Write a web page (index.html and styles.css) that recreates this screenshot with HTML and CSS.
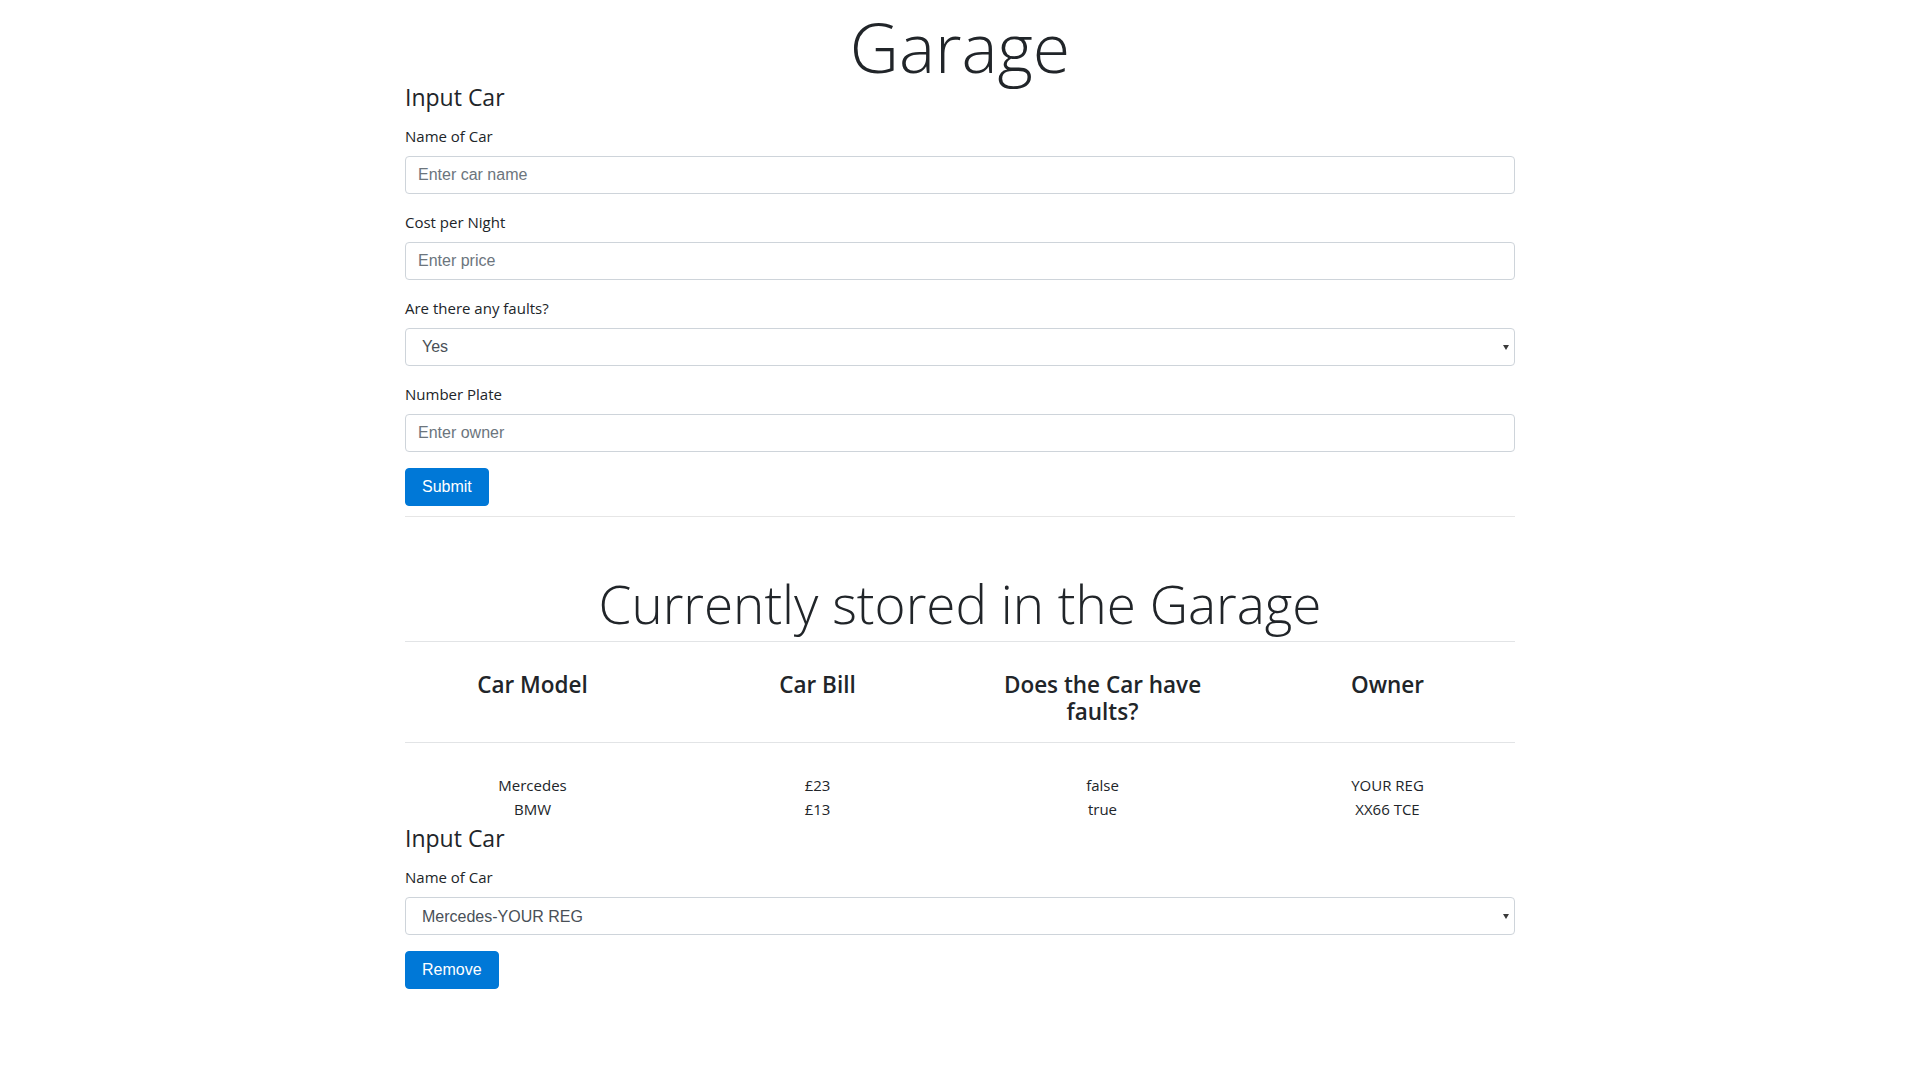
FILE: index.html
```html
<!DOCTYPE html>
<html lang="en">
<head>
<meta charset="utf-8">
<title>Garage</title>
<link rel="stylesheet" href="styles.css">
</head>
<body>
<div class="container">
  <h1 class="page-title">Garage</h1>

  <form class="car-form">
    <h4 class="section-title">Input Car</h4>
    <div class="form-group">
      <label class="form-label">Name of Car</label>
      <input class="form-control" type="text" placeholder="Enter car name">
    </div>
    <div class="form-group">
      <label class="form-label">Cost per Night</label>
      <input class="form-control" type="text" placeholder="Enter price">
    </div>
    <div class="form-group">
      <label class="form-label">Are there any faults?</label>
      <div class="select-wrap">
        <select class="form-control form-select">
          <option>Yes</option>
          <option>No</option>
        </select>
      </div>
    </div>
    <div class="form-group">
      <label class="form-label">Number Plate</label>
      <input class="form-control" type="text" placeholder="Enter owner">
    </div>
    <button class="btn" type="button">Submit</button>
  </form>

  <div class="divider"></div>

  <h2 class="stored-title">Currently stored in the Garage</h2>

  <div class="car-table">
    <div class="table-head">
      <div class="table-grid">
        <div class="th">Car Model</div>
        <div class="th">Car Bill</div>
        <div class="th">Does the Car have faults?</div>
        <div class="th">Owner</div>
      </div>
    </div>
    <div class="table-body">
      <div class="table-grid">
        <div class="td">Mercedes</div>
        <div class="td">£23</div>
        <div class="td">false</div>
        <div class="td">YOUR REG</div>
      </div>
      <div class="table-grid">
        <div class="td">BMW</div>
        <div class="td">£13</div>
        <div class="td">true</div>
        <div class="td">XX66 TCE</div>
      </div>
    </div>
  </div>

  <form class="remove-form">
    <h4 class="section-title">Input Car</h4>
    <div class="form-group">
      <label class="form-label">Name of Car</label>
      <div class="select-wrap">
        <select class="form-control form-select">
          <option>Mercedes-YOUR REG</option>
          <option>BMW-XX66 TCE</option>
        </select>
      </div>
    </div>
    <button class="btn" type="button">Remove</button>
  </form>
</div>
</body>
</html>
```

FILE: styles.css
```css
* {
  box-sizing: border-box;
}

html, body {
  margin: 0;
  padding: 0;
  background: #ffffff;
}

body {
  font-family: "Open Sans", "Noto Sans", sans-serif;
  font-size: 16px;
  line-height: 24px;
  color: #212529;
}

.container {
  width: 1110px;
  margin: 0 auto;
}

.page-title {
  margin: 0 0 -10px;
  font-size: 68px;
  line-height: 93px;
  font-weight: 300;
  text-align: center;
  color: #212529;
}

.section-title {
  margin: 0 0 12px;
  font-size: 23px;
  line-height: 28.8px;
  font-weight: 400;
}

.form-group {
  margin-bottom: 16px;
}

.form-label {
  display: block;
  margin-bottom: 8px;
  font-size: 15px;
  line-height: 24px;
}

.form-control {
  display: block;
  width: 100%;
  height: 38px;
  padding: 0 12px;
  border: 1px solid #ced4da;
  border-radius: 4px;
  background: #ffffff;
  font-family: "Liberation Sans", Arial, sans-serif;
  font-size: 16px;
  color: #495057;
  outline: none;
}

.form-control::placeholder {
  color: #6c757d;
  opacity: 1;
}

.select-wrap {
  position: relative;
}

.form-select {
  appearance: none;
  -webkit-appearance: none;
  padding-left: 12px;
  text-indent: 4px;
}

.select-wrap::after {
  content: "";
  position: absolute;
  right: 6px;
  top: 17px;
  width: 0;
  height: 0;
  border-left: 3.5px solid transparent;
  border-right: 3.5px solid transparent;
  border-top: 5px solid #3a3a3a;
  pointer-events: none;
}

.btn {
  display: inline-block;
  height: 38px;
  padding: 0 16px;
  border: 1px solid #0078d7;
  border-radius: 4px;
  background: #0078d7;
  color: #ffffff;
  font-family: "Liberation Sans", Arial, sans-serif;
  font-size: 16px;
  line-height: 36px;
  cursor: pointer;
}

.divider {
  margin-top: 10px;
  border-top: 1px solid #e6e6e6;
}

.stored-title {
  margin: 55px 0 6px;
  font-size: 53px;
  line-height: 63.6px;
  font-weight: 300;
  text-align: center;
}

.table-head {
  border-top: 1px solid #e2e4e6;
  border-bottom: 1px solid #e2e4e6;
}

.table-grid {
  display: grid;
  grid-template-columns: repeat(4, 1fr);
  margin: 0 -15px;
}

.th {
  padding: 30px 12px 17px;
  font-size: 22.5px;
  line-height: 26.4px;
  font-weight: 600;
  text-align: center;
}

.table-body {
  padding-top: 30px;
}

.td {
  padding: 0 12px;
  font-size: 15px;
  line-height: 24px;
  text-align: center;
}

.remove-form {
  margin-top: 3px;
}
```
